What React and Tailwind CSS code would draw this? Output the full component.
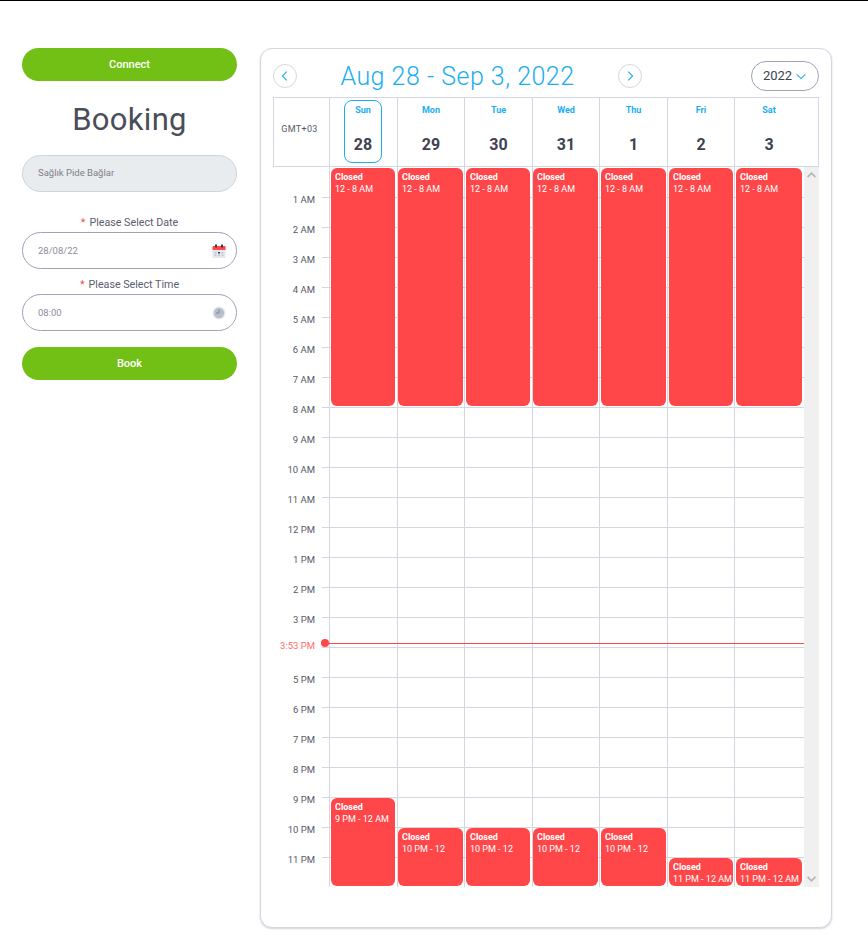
import React from "react";

const days = [
  { d: "Sun", n: "28", active: true, l: "left-[1px] right-[2px]", ev: [{ t: "12 - 8 AM", top: "top-[1px]", h: "h-[238px]" }, { t: "9 PM - 12 AM", top: "top-[631px]", h: "h-[88px]" }] },
  { d: "Mon", n: "29", l: "left-0 right-[1px]", ev: [{ t: "12 - 8 AM", top: "top-[1px]", h: "h-[238px]" }, { t: "10 PM - 12", top: "top-[661px]", h: "h-[58px]" }] },
  { d: "Tue", n: "30", l: "left-[1px] right-[2px]", ev: [{ t: "12 - 8 AM", top: "top-[1px]", h: "h-[238px]" }, { t: "10 PM - 12", top: "top-[661px]", h: "h-[58px]" }] },
  { d: "Wed", n: "31", l: "left-0 right-[1px]", ev: [{ t: "12 - 8 AM", top: "top-[1px]", h: "h-[238px]" }, { t: "10 PM - 12", top: "top-[661px]", h: "h-[58px]" }] },
  { d: "Thu", n: "1", l: "left-[1px] right-[1px]", ev: [{ t: "12 - 8 AM", top: "top-[1px]", h: "h-[238px]" }, { t: "10 PM - 12", top: "top-[661px]", h: "h-[58px]" }] },
  { d: "Fri", n: "2", l: "left-[1px] right-[1px]", ev: [{ t: "12 - 8 AM", top: "top-[1px]", h: "h-[238px]" }, { t: "11 PM - 12 AM", top: "top-[691px]", h: "h-[28px]" }] },
  { d: "Sat", n: "3", last: true, l: "left-[1px] right-[2px]", ev: [{ t: "12 - 8 AM", top: "top-[1px]", h: "h-[238px]" }, { t: "11 PM - 12 AM", top: "top-[691px]", h: "h-[28px]" }] },
];

const hours = ["1 AM","2 AM","3 AM","4 AM","5 AM","6 AM","7 AM","8 AM","9 AM","10 AM","11 AM","12 PM","1 PM","2 PM","3 PM","3:53 PM","5 PM","6 PM","7 PM","8 PM","9 PM","10 PM","11 PM"];
const cells = Array.from({ length: 24 }, (_, i) => i);

function Chevron({ dir, cls, sw = 1.3 }) {
  const d = dir === "left" ? "M9 2 L4 7 L9 12" : dir === "right" ? "M5 2 L10 7 L5 12" : dir === "down" ? "M2 5 L7 10 L12 5" : "M2 9 L7 4 L12 9";
  return (
    <svg viewBox="0 0 14 14" className={cls} fill="none" stroke="currentColor" strokeWidth={sw}>
      <path d={d} />
    </svg>
  );
}

function CalIcon() {
  return (
    <svg viewBox="0 0 14 14" className="w-[14px] h-[14px] shrink-0">
      <rect x="0.5" y="2" width="13" height="12" rx="1" fill="#e4e7ec" />
      <path d="M0.5 3 a1 1 0 0 1 1 -1 h11 a1 1 0 0 1 1 1 v3 h-13 z" fill="#ff474a" />
      <rect x="3" y="0.5" width="2" height="3" fill="#3b3f4c" />
      <rect x="9" y="0.5" width="2" height="3" fill="#3b3f4c" />
      <rect x="2.5" y="8" width="2" height="1.5" fill="#c3c8d2" />
      <rect x="6" y="8" width="2" height="1.5" fill="#3b3f4c" />
      <rect x="9.5" y="8" width="2" height="1.5" fill="#c3c8d2" />
      <rect x="2.5" y="10.5" width="2" height="1.5" fill="#c3c8d2" />
      <rect x="6" y="10.5" width="2" height="1.5" fill="#c3c8d2" />
      <rect x="9.5" y="10.5" width="2" height="1.5" fill="#c3c8d2" />
    </svg>
  );
}

function ClockIcon() {
  return (
    <svg viewBox="0 0 14 14" className="w-[14px] h-[14px] shrink-0">
      <circle cx="7" cy="7" r="6.5" fill="#e6e8ee" />
      <circle cx="7" cy="7" r="5.2" fill="#b9bfcc" />
      <path d="M7 3.5 V7 H4" stroke="#6a7080" strokeWidth="0.7" fill="none" />
    </svg>
  );
}

function Label({ children }) {
  return (
    <div className="text-center text-[10.7px] leading-[14px] text-[#5a5d6e]">
      <span className="text-[#f0524f] mr-[4px]">*</span>
      {children}
    </div>
  );
}

function Field({ value, icon }) {
  return (
    <div className="mt-[2px] h-[37px] rounded-full border border-[#a0a3b6] bg-white pl-[15px] pr-[10px] flex items-center justify-between text-[9.5px] text-[#8d8d99]">
      <span className="pt-[2px]">{value}</span>
      {icon}
    </div>
  );
}

export default function App() {
  return (
    <div className="min-h-[935px] bg-white border-t border-black flex items-start pt-[47px] pl-[22px] font-['Roboto',sans-serif]">
      <div className="w-[215px] shrink-0 flex flex-col">
        <div className="h-[33px] pt-[1px] rounded-full bg-[#72c015] text-white text-[11px] font-medium flex items-center justify-center">Connect</div>
        <h1 className="mt-[20px] h-[38px] text-center text-[31px] leading-[38px] tracking-[0.3px] font-normal text-[#4a4d59]">Booking</h1>
        <div className="mt-[16px] h-[37px] rounded-full border border-[#ced4da] bg-[#e9ecef] pl-[15px] flex items-center text-[9.5px] text-[#80808a]">Sağlık Pide Bağlar</div>
        <div className="mt-[24px]"><Label>Please Select Date</Label></div>
        <Field value="28/08/22" icon={<CalIcon />} />
        <div className="mt-[9px]"><Label>Please Select Time</Label></div>
        <Field value="08:00" icon={<ClockIcon />} />
        <div className="mt-[16px] h-[33px] pt-[1px] rounded-full bg-[#72c015] text-white text-[11px] font-medium flex items-center justify-center">Book</div>
      </div>

      <div className="ml-[23px] w-[572px] h-[880px] rounded-[12px] border border-[#d5d7e0] shadow-[0_1px_2px_rgba(120,125,150,0.35)] bg-white px-[12px] pt-[12px]">
        <div className="h-[30px] flex items-center">
          <button className="w-[24px] h-[24px] rounded-full border border-[#d5d7e0] flex items-center justify-center text-[#1aaef0]">
            <Chevron dir="left" cls="w-[12px] h-[12px]" />
          </button>
          <div className="flex-1 pt-[1px] text-center text-[25px] leading-[30px] font-light tracking-[0.5px] text-[#1aaef0]">Aug 28 - Sep 3, 2022</div>
          <button className="w-[24px] h-[24px] rounded-full border border-[#d5d7e0] flex items-center justify-center text-[#1aaef0]">
            <Chevron dir="right" cls="w-[12px] h-[12px]" />
          </button>
          <div className="ml-[109px] w-[68px] h-[30px] rounded-full border border-[#a0a3b6] flex items-center justify-center gap-[3px] text-[13px] text-[#40434f]">
            2022
            <Chevron dir="down" cls="w-[12px] h-[12px] text-[#1aaef0]" />
          </div>
        </div>

        <div className="mt-[6px] h-[70px] border border-[#d5d7e0] grid grid-cols-[55px_68px_67px_68px_67px_68px_67px_1fr]">
          <div className="flex items-center justify-center pr-[4px] pb-[5px] text-[9px] tracking-[0.3px] text-[#55586a]">GMT+03</div>
          {days.map((x) => (
            <div key={x.d} className={`border-l border-[#d5d7e0] flex justify-center pt-[2px] ${x.last ? "pr-[15px]" : ""} ${x.active ? "pr-[1px]" : ""}`}>
              <div className={`w-[38px] h-[63px] rounded-[8px] flex flex-col items-center pt-[3px] ${x.active ? "border border-[#1aaef0]" : "border border-transparent"}`}>
                <span className="text-[9px] leading-[12px] font-bold text-[#1aaef0]">{x.d}</span>
                <span className="mt-[19px] text-[16px] leading-[20px] font-bold text-[#40434f]">{x.n}</span>
              </div>
            </div>
          ))}
        </div>

        <div className="relative h-[720px] grid grid-cols-[56px_68px_67px_68px_67px_68px_67px_1fr_15px]">
          <div className="pt-[18px]">
            {hours.map((h) => (
              <div key={h} className="h-[30px] flex items-center justify-end">
                <span className={`text-[9.5px] ${h === "3:53 PM" ? "mb-[8px] text-[#ff6b6b]" : "text-[#55586a]"}`}>{h}</span>
                <span className="ml-[7px] w-[7px] border-t border-[#d5d7e0] -translate-y-[3px]" />
              </div>
            ))}
          </div>
          {days.map((x) => (
            <div key={x.d} className="relative border-l border-[#d5d7e0]">
              {cells.map((c) => (
                <div key={c} className={`h-[30px] ${c === 0 ? "" : "border-t border-[#d5d7e0]"}`} />
              ))}
              {x.ev.map((e) => (
                <div key={e.t} className={`absolute ${x.l} ${e.top} ${e.h} rounded-[6px] bg-[#ff474a] text-white px-[4px] pt-[3px] text-[9px] leading-[12px] whitespace-nowrap overflow-hidden`}>
                  <div className="font-bold">Closed</div>
                  <div>{e.t}</div>
                </div>
              ))}
            </div>
          ))}
          <div className="bg-[#f0f0f0] flex flex-col items-center justify-between py-[3px] text-[#b4b4b4]">
            <Chevron dir="up" cls="w-[11px] h-[11px]" sw={2} />
            <Chevron dir="down" cls="w-[11px] h-[11px]" sw={2} />
          </div>
          <div className="absolute left-[48px] right-[15px] top-[476px] h-px bg-[#ff474a]">
            <span className="absolute left-0 -top-[4px] w-[8px] h-[8px] rounded-full bg-[#ff474a]" />
          </div>
        </div>
      </div>
    </div>
  );
}
